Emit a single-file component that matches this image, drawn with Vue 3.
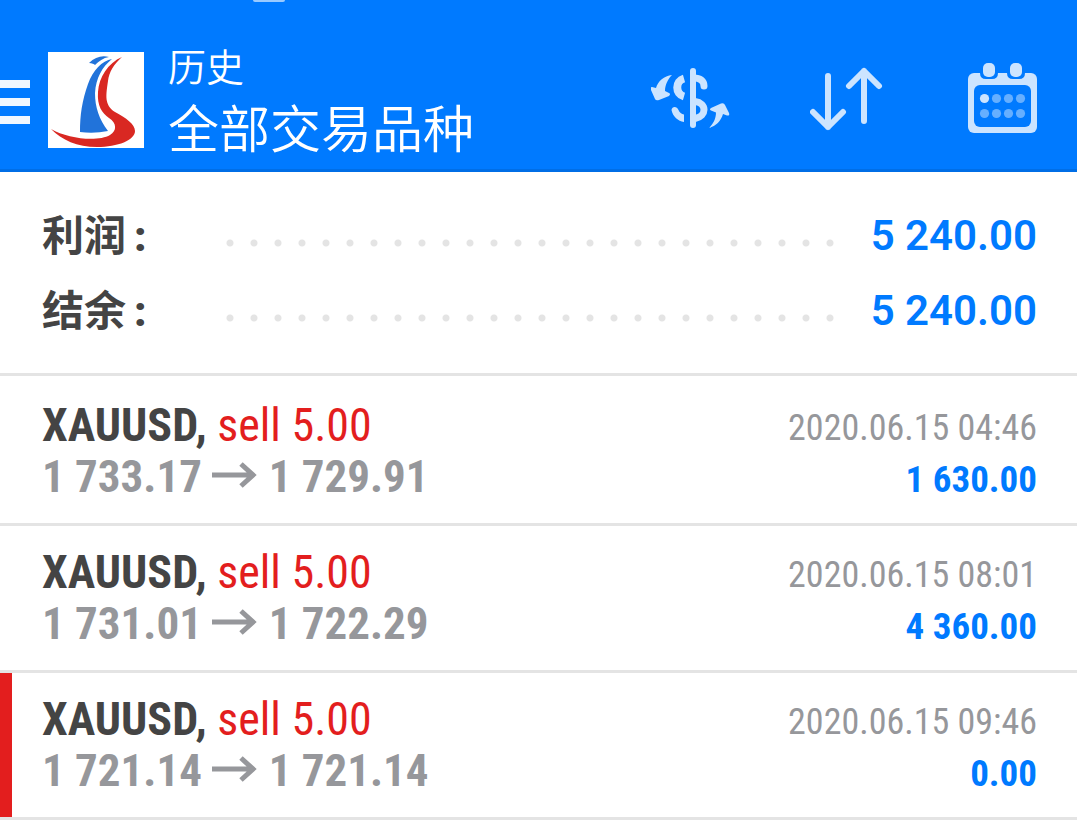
<script setup>
const totals = [
  { label: '利润', value: '5 240.00' },
  { label: '结余', value: '5 240.00' },
]

const deals = [
  { symbol: 'XAUUSD', side: 'sell 5.00', open: '1 733.17', close: '1 729.91', time: '2020.06.15 04:46', profit: '1 630.00' },
  { symbol: 'XAUUSD', side: 'sell 5.00', open: '1 731.01', close: '1 722.29', time: '2020.06.15 08:01', profit: '4 360.00' },
  { symbol: 'XAUUSD', side: 'sell 5.00', open: '1 721.14', close: '1 721.14', time: '2020.06.15 09:46', profit: '0.00', flagged: true },
]

const calendarDots = [0, 1, 2, 3, 4, 5, 6, 7]
</script>

<template>
  <div class="screen">
    <header class="bar">
      <span class="notch"></span>
      <button class="menu" type="button" aria-label="菜单">
        <i></i><i></i><i></i>
      </button>
      <svg class="logo" viewBox="0 0 96 96" aria-hidden="true">
        <rect width="96" height="96" fill="#fff" />
        <path d="M41 11C47 5 54 3 61 5C55 6 51 9 47 13C46 12 44 11 41 11Z" fill="#2173da" />
        <path d="M64 7C54 9 45 18 40 32C34 49 32 63 32 80Q46 82 60 79C51 67 47 55 47 41C48 26 54 15 64 7Z" fill="#2173da" />
        <path d="M74 5C60 11 51 25 50 40C49 54 54 61 61 66C69 71 69 79 62 83C50 90 20 87 3 77C14 88 29 95 49 95C70 95 87 88 87 79C87 72 78 66 67 60C56 53 58 43 60 29C61 20 66 12 74 5Z" fill="#d92822" />
      </svg>
      <div class="titles">
        <p class="section">历史</p>
        <h1 class="title">全部交易品种</h1>
      </div>
      <nav class="tools">
        <button type="button" aria-label="货币">
          <svg width="79" height="62" viewBox="0 0 79 62" fill="none" stroke="#cce4ff">
            <path d="M42 3V57" stroke-width="6" stroke-linecap="round" />
            <path d="M33 10.500C24 13 24 26 33 28.500" stroke-width="8" />
            <path d="M43 10C49 10 53 13 53 18" stroke-width="7" stroke-linecap="round" />
            <path d="M44 33.500C56 35 56 48 44 50.500" stroke-width="7" />
            <path d="M20.500 42C21 38 26 38 27.500 42C28.500 44.500 30.500 46 33 46.500V54C27 53 22 49 20.500 42Z" fill="#cce4ff" stroke="none" />
            <path d="M21 7C13 8 7 13 5 20L1 19Q-1 19 0 22L4 31Q5 33 8 32L18 28Q20 26 18 25L14 23C14 17 17 11 21 7Z" fill="#cce4ff" stroke="none" />
            <path d="M58 60C65 58 70 53 72 46L76 47.500Q79 48 78 45L74 37Q73 34.500 70 35.500L60 40Q58 41.500 60 42.500L65 44.500C65 51 62 56 58 60Z" fill="#cce4ff" stroke="none" />
          </svg>
        </button>
        <button type="button" aria-label="排序">
          <svg width="78" height="64" viewBox="0 0 78 64" fill="none" stroke="#cce4ff" stroke-width="6" stroke-linecap="round" stroke-linejoin="round">
            <path d="M18 9V60M3 45L18 60L33 45M54 54V4M39 19L54 4L69 19" />
          </svg>
        </button>
        <button type="button" aria-label="日历">
          <svg width="69" height="72" viewBox="0 2 69 72">
            <rect y="12" width="69" height="60" rx="6" fill="#cce4ff" />
            <rect x="6" y="24" width="57" height="42" rx="6" fill="#007aff" />
            <path d="M12 10V12Q12 18 18 18H24Q30 18 30 12V10ZM39 10V12Q39 18 45 18H51Q57 18 57 12V10Z" fill="#007aff" />
            <rect x="15" y="2" width="12" height="14" rx="5" fill="#cce4ff" />
            <rect x="42" y="2" width="12" height="14" rx="5" fill="#cce4ff" />
            <circle
              v-for="n in calendarDots" :key="n" r="4.6"
              :cx="16.5 + (n % 4) * 12" :cy="n < 4 ? 37.5 : 52.5"
              :fill="n === 0 ? '#cce4ff' : '#66afff'"
            />
          </svg>
        </button>
      </nav>
    </header>

    <main>
      <dl class="totals">
        <div v-for="t in totals" :key="t.label" class="total">
          <dt>{{ t.label }}<span class="colon">:</span></dt>
          <dd><span class="leader"></span><b>{{ t.value }}</b></dd>
        </div>
      </dl>

      <ul class="deals">
        <li v-for="d in deals" :key="d.time" class="deal" :class="{ flagged: d.flagged }">
          <div>
            <p class="name"><b>{{ d.symbol }},</b> <span>{{ d.side }}</span></p>
            <p class="prices">
              {{ d.open }}
              <svg width="46" height="26" viewBox="0 0 46 26" fill="none" stroke="#96979b" stroke-width="5">
                <path d="M0 13H42M29 2L41 13L29 24" />
              </svg>
              {{ d.close }}
            </p>
          </div>
          <div class="result">
            <time>{{ d.time }}</time>
            <b>{{ d.profit }}</b>
          </div>
        </li>
      </ul>
    </main>
  </div>
</template>

<style>
body {
  margin: 0;
  background: #fff;
}
</style>

<style scoped>
.screen {
  font-family: Roboto, "Noto Sans CJK SC", sans-serif;
  color: #444;
}
p, h1, dl, dd, ul {
  margin: 0;
  padding: 0;
}
button {
  padding: 0;
  border: 0;
  background: none;
  display: flex;
}
.bar {
  position: relative;
  box-sizing: border-box;
  height: 172px;
  padding: 31px 40px 0 0;
  display: flex;
  align-items: center;
  background: #007aff;
  border-bottom: 3px solid #006ee6;
}
.notch {
  position: absolute;
  top: 0;
  left: 253px;
  width: 32px;
  height: 2px;
  border-radius: 0 0 2px 2px;
  background: #99caff;
}
.menu {
  width: 30px;
  padding-top: 4px;
  flex-direction: column;
  gap: 10px;
}
.menu i {
  width: 30px;
  height: 8px;
  background: #f0f7ff;
}
.logo {
  width: 96px;
  height: 96px;
  margin: 0 24px 0 18px;
}
.titles {
  flex: 1;
  padding-bottom: 4px;
  color: #fff;
  font-family: "Noto Sans CJK SC", sans-serif;
  font-weight: 350;
  white-space: nowrap;
}
.section {
  font-size: 38px;
  line-height: 56px;
}
.title {
  font-size: 51px;
  line-height: 66px;
  font-weight: inherit;
}
.tools {
  display: flex;
  align-items: center;
  gap: 80px;
  padding-bottom: 2px;
}
.totals {
  padding: 26px 40px 25px 42px;
  border-bottom: 3px solid #e4e4e4;
}
.total {
  display: flex;
  align-items: center;
  height: 75px;
  font-size: 42px;
  line-height: 75px;
}
dt {
  width: 176px;
  padding-top: 2px;
  font-weight: 700;
}
.colon {
  margin-left: 8px;
  font-weight: 900;
}
dd {
  flex: 1;
  display: flex;
  align-items: center;
  gap: 28px;
}
.leader {
  flex: 1;
  height: 8px;
  margin-top: 14px;
  background: radial-gradient(circle, #e4e4e4 3px, transparent 4px) 0 0 / 24px 8px repeat-x;
}
dd b {
  font-weight: 600;
  color: #007aff;
}
.deals {
  list-style: none;
  padding-top: 3px;
}
.deal {
  display: flex;
  justify-content: space-between;
  padding: 21px 40px 18px 42px;
  border-bottom: 3px solid #e4e4e4;
  font-family: "Roboto Condensed", Roboto, sans-serif;
}
.flagged {
  background: linear-gradient(#e31e1e, #e31e1e) 0 0 / 12px 100% no-repeat;
}
.name, .prices {
  font-size: 46px;
  line-height: 51px;
}
.name span {
  color: #e31e1e;
}
.prices {
  font-size: 45px;
  font-weight: 700;
  color: #96979b;
}
.prices svg {
  vertical-align: 4px;
}
.result {
  padding-top: 3px;
  display: flex;
  flex-direction: column;
  align-items: flex-end;
  font-size: 37px;
  line-height: 51px;
}
.result time {
  font-size: 36px;
  color: #96979b;
}
.result b {
  color: #007aff;
}
</style>
